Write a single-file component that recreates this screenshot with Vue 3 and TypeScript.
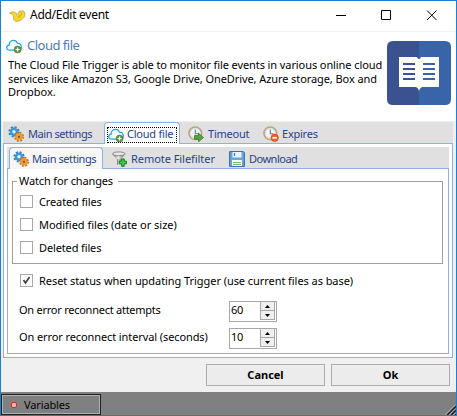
<script setup lang="ts">
import { ref } from 'vue'

interface Tab { label: string; icon: string; cls: string }

const outerTabs: Tab[] = [
  { label: 'Main settings', icon: 'gears', cls: 'main' },
  { label: 'Cloud file', icon: 'cloud', cls: 'cloud' },
  { label: 'Timeout', icon: 'timeout', cls: 'timeout' },
  { label: 'Expires', icon: 'expires', cls: 'expires' },
]
const innerTabs: Tab[] = [
  { label: 'Main settings', icon: 'gears', cls: 'main' },
  { label: 'Remote Filefilter', icon: 'filter', cls: 'filter' },
  { label: 'Download', icon: 'disk', cls: 'download' },
]
const outer = ref(1)
const inner = ref(0)

const watches = ref([
  { label: 'Created files', cls: 'created', on: false },
  { label: 'Modified files (date or size)', cls: 'modified', on: false },
  { label: 'Deleted files', cls: 'created', on: false },
])
const reset = ref(true)
const spins = ref([
  { label: 'On error reconnect attempts', cls: 'attempts', value: 60 },
  { label: 'On error reconnect interval (seconds)', cls: 'interval', value: 10 },
])
</script>

<template>
  <div class="window">
    <svg class="defs" width="0" height="0">
      <defs>
        <linearGradient id="cone" x1="0" x2="1"><stop offset="0" stop-color="#555" /><stop offset=".45" stop-color="#eee" /><stop offset="1" stop-color="#555" /></linearGradient>
        <linearGradient id="stem" x1="0" x2="1"><stop offset="0" stop-color="#666" /><stop offset=".5" stop-color="#ddd" /><stop offset="1" stop-color="#555" /></linearGradient>
        <symbol id="cloud" viewBox="0 0 16 16">
          <path d="M3.8 12.2C1.9 12.2.7 11.200.7 9.700.7 8.300 1.700 7.200 3.100 7.100 3.100 4.300 5 2.300 7.300 2.300 9.300 2.300 10.900 3.400 11.400 5.200 13.800 5.100 15.300 6.600 15.300 8.900 15.300 10.900 14 12.200 12.300 12.200Z" fill="#f5fcff" stroke="#1ba6e0" stroke-width="1.3" />
          <circle cx="11.600" cy="11.500" r="3.500" fill="#5f9548" stroke="#467935" stroke-width=".6" />
          <path d="M11.600 9.500v4M9.600 11.500h4" stroke="#fff" stroke-width="1.200" />
        </symbol>
        <symbol id="gears" viewBox="0 0 16 16">
          <circle cx="6" cy="5.800" r="4.500" fill="none" stroke="#2f83c2" stroke-width="2.400" stroke-dasharray="2 1.534" />
          <circle cx="6" cy="5.800" r="3" fill="#d3ebf7" stroke="#3d97d2" stroke-width="2.400" />
          <circle cx="6" cy="5.800" r="1" fill="#fff" />
          <circle cx="11" cy="10.800" r="4" fill="none" stroke="#c9691d" stroke-width="2" stroke-dasharray="1.800 1.342" />
          <circle cx="11" cy="10.800" r="2.500" fill="#fff" stroke="#f09a30" stroke-width="2.500" />
          <circle cx="11" cy="10.800" r="1.200" fill="#795338" />
        </symbol>
        <symbol id="clock" viewBox="0 0 16 16">
          <circle cx="7.300" cy="7.300" r="6.300" fill="#f3f5f8" stroke="#bba47f" stroke-width="1.600" />
          <circle cx="7.300" cy="7.300" r="4.900" fill="none" stroke="#cdd7e2" stroke-width=".8" />
          <path d="M7.300 3.500v4.200h3" fill="none" stroke="#77777c" stroke-width="1.100" />
        </symbol>
        <symbol id="timeout" viewBox="0 0 16 16">
          <use href="#clock" width="16" height="16" />
          <path d="M6.500 9.600h4V7.200l5 4.300-5 4.300v-2.600h-4z" fill="#55a63c" stroke="#30752a" stroke-width=".8" />
        </symbol>
        <symbol id="expires" viewBox="0 0 16 16">
          <use href="#clock" width="16" height="16" />
          <circle cx="11.700" cy="11.800" r="3.700" fill="#e7662d" stroke="#c74718" stroke-width=".7" />
          <path d="M9.500 11.800h4.400" stroke="#fff" stroke-width="1.600" />
        </symbol>
        <symbol id="filter" viewBox="0 0 16 16">
          <path d="M.4 3L5 8.500h3.600L13.200 3z" fill="url(#cone)" />
          <path d="M5 8.300h3.600v4.500L5 14z" fill="url(#stem)" />
          <ellipse cx="6.800" cy="2.800" rx="6.300" ry="1.900" fill="#e6e6e6" stroke="#777" stroke-width=".8" />
          <path d="M9.600 7.900h2.600v2.300h2.300v2.600h-2.300v2.500H9.600v-2.500H7.300v-2.600h2.300z" fill="#3bd048" stroke="#137a20" stroke-width="1" />
        </symbol>
        <symbol id="disk" viewBox="0 0 16 16">
          <path d="M.6.6h13.800l1 1v13.800H.6z" fill="#69a5dc" stroke="#2f6ca8" stroke-width="1" />
          <path d="M3.500 1h9v5.500h-9z" fill="#edf4fa" />
          <path d="M5.500 2v3" stroke="#3b73ad" stroke-width="1.200" />
          <path d="M3 9h10v6H3z" fill="#f4faef" />
          <path d="M4 11.500h8M4 13.500h8" stroke="#7fc162" stroke-width="1.200" />
        </symbol>
      </defs>
    </svg>

    <header class="titlebar">
      <svg class="logo" viewBox="0 0 17 13" width="17" height="13">
        <path d="M.5 3L2.500 2H5.500L7.500 3.500 8.500 6.300 10.500 6 9 3.500 10.500 1H12.500L14.500 .800 15.800 3V6.500L12.500 9.800 9 11.300H6.500L4.500 9.500V6L3 4Z" fill="#f9d922" stroke="#b8a35a" stroke-width=".8" stroke-linejoin="round" />
        <path d="M11.500 2l1.500 1.800-3.500 4.400" fill="none" stroke="#c9a51b" stroke-width=".8" />
      </svg>
      <span class="title">Add/Edit event</span>
      <svg class="winctl" viewBox="0 0 102 12" width="102" height="12" fill="none" stroke="#000">
        <path d="M0 5.500h10M45.500 .500h9v9h-9z" /><path d="M91 .500l9.500 9.500M100.500 .500L91 10" />
      </svg>
    </header>

    <section class="intro">
      <div class="copy">
        <div class="heading"><svg width="16" height="16"><use href="#cloud" /></svg><span>Cloud file</span></div>
        <p><span class="l1">The Cloud File Trigger is able to monitor file events in various online cloud</span><br><span class="l2">services like Amazon S3, Google Drive, OneDrive, Azure storage, Box and</span><br><span>Dropbox.</span></p>
      </div>
      <svg class="book" viewBox="0 0 64 64" width="64" height="64">
        <path d="M32 0H6Q0 0 0 6v52q0 6 6 6h26z" fill="#3a5290" /><path d="M32 0h26q6 0 6 6v52q0 6-6 6H32z" fill="#3965a8" />
        <path d="M12 16h18q.5 2 2 2t2-2h18v30H36q-3 0-4 4-1-4-4-4H12z" fill="#fff" />
        <path d="M16 23h12M16 28h12M16 33h12M16 38h12" stroke="#3a5290" stroke-width="2" />
        <path d="M36 23h12M36 28h12M36 33h12M36 38h12" stroke="#3965a8" stroke-width="2" />
      </svg>
    </section>

    <main class="body">
      <nav class="strip outer">
        <div v-for="(t, i) in outerTabs" :key="t.label" class="tab" :class="[t.cls, { active: outer === i }]" @click="outer = i">
          <span class="face"><svg width="16" height="16"><use :href="'#' + t.icon" /></svg><span class="label">{{ t.label }}</span></span>
        </div>
      </nav>
      <div class="panel outer-panel">
        <nav class="strip inner">
          <div v-for="(t, i) in innerTabs" :key="t.label" class="tab" :class="[t.cls, { active: inner === i }]" @click="inner = i">
            <svg width="16" height="16"><use :href="'#' + t.icon" /></svg><span class="label">{{ t.label }}</span>
          </div>
        </nav>
        <div class="panel inner-panel">
          <div class="group">
            <span class="legend">Watch for changes</span>
            <div v-for="w in watches" :key="w.label" class="check" @click="w.on = !w.on">
              <span class="box"><svg v-if="w.on" width="11" height="11"><path d="M2.500 5l2 3 4-6" /></svg></span><span :class="w.cls">{{ w.label }}</span>
            </div>
          </div>
          <div class="check reset" @click="reset = !reset">
            <span class="box"><svg v-if="reset" width="11" height="11"><path d="M2.500 5l2 3 4-6" /></svg></span><span class="base">Reset status when updating Trigger (use current files as base)</span>
          </div>
          <div v-for="s in spins" :key="s.label" class="field">
            <span class="name" :class="s.cls">{{ s.label }}</span>
            <div class="spin">
              <span class="value">{{ s.value }}</span>
              <div class="steps">
                <span class="step" @click="s.value++"><svg width="6" height="3"><path d="M0 3L2.500 0 5 3z" /></svg></span>
                <span class="step" @click="s.value--"><svg width="6" height="3"><path d="M0 0l2.500 3L5 0z" /></svg></span>
              </div>
            </div>
          </div>
        </div>
      </div>
      <div class="actions"><div class="btn cancel">Cancel</div><div class="btn">Ok</div></div>
    </main>

    <footer class="status">
      <div class="vars"><i class="dot"></i><span>Variables</span></div>
      <svg class="grip" width="11" height="11">
        <path d="M0 11L11 0V11z" fill="#555" /><path d="M.500 11L11 .500M4.500 11L11 4.500M8.500 11L11 8.500" stroke="#eee" stroke-width="1" /><path d="M2 11L11 2M6 11L11 6M10 11l1-1" stroke="#222" stroke-width="1.300" />
      </svg>
    </footer>
  </div>
</template>

<style>
body { overflow: hidden; }
</style>
<style scoped>
* { box-sizing: border-box; }
.window { width: 457px; height: 416px; border: 1px solid #1a80d3; background: #fff; display: flex; flex-direction: column; font: 11px/13px "Noto Sans", "DejaVu Sans Condensed", sans-serif; color: #000; white-space: nowrap; cursor: default; }
.window svg { display: block; flex: none; }
.window .defs { position: absolute; }
.titlebar { height: 31px; flex: none; border-bottom: 1px solid #f0f0f0; display: flex; padding-left: 8px; }
.logo { margin-top: 9px; }
.title { font-size: 12px; line-height: 16px; letter-spacing: -.27px; margin: 6px 0 0 4px; }
.winctl { margin: 9px 18px 0 auto; }
.intro { height: 89px; flex: none; display: flex; justify-content: space-between; padding: 0 5px 0 5px; }
.heading { display: flex; height: 26px; padding-top: 6px; gap: 5px; color: #4b7eb5; font-size: 13px; line-height: 14px; letter-spacing: -.5px; }
.intro p { margin: 0 0 0 2px; line-height: 13.5px; }
.l1 { letter-spacing: -.09px; }
.l2 { letter-spacing: -.085px; }
.book { margin-top: 9px; }
.body { height: 271px; flex: none; background: #f0f0f0; padding: 1px 3px 0 2px; }
.strip { display: flex; height: 21px; background: #e0e0e0; color: #1e4489; }
.inner { padding-left: 2px; width: 442px; }
.tab { height: 21px; display: flex; align-items: center; gap: 4px; padding: 2px 0 0 8px; }
.face { display: flex; align-items: center; gap: 4px; }
.tab.active { height: 22px; background: #fff; border: 1px solid #8fb0e4; border-bottom: 0; border-radius: 4px 4px 0 0; position: relative; }
.outer .main { width: 101px; padding-left: 5px; }
.outer .cloud { width: 76px; padding: 3px 2px 1px; }
.outer .active .face { border: 1px dotted #000; height: 16px; flex: 1; gap: 3px; }
.outer .active .label { line-height: 11px; }
.outer .timeout { width: 75px; }
.outer .expires .face { gap: 3px; }
.inner .main { width: 94px; padding: 1px 0 0 3px; gap: 3px; background: #f7f7f7; }
.inner .active .label { margin-top: -2px; }
.inner .filter { width: 118px; padding-left: 9px; gap: 3px; }
.main .label { letter-spacing: -.43px; }
.cloud .label, .timeout .label, .expires .label { letter-spacing: -.23px; }
.outer .cloud .label { margin-top: -2px; }
.filter .label { letter-spacing: -.05px; }
.download .label { letter-spacing: -.5px; }
.panel { border: 1px solid #8fb0e4; background: #fff; }
.outer-panel { height: 215px; width: 450px; padding: 3px; }
.inner-panel { height: 186px; width: 442px; padding: 12px 5px 0 4px; }
.group { border: 1px solid #a0a0a0; height: 83px; padding: 13px 0 0 7px; display: flex; flex-direction: column; gap: 10px; position: relative; }
.legend { position: absolute; left: 4px; top: -8px; background: #fff; padding: 0 5px 0 2px; letter-spacing: -.13px; }
.check { display: flex; height: 13px; gap: 6px; }
.box { width: 13px; height: 13px; border: 1px solid #a8a8a8; flex: none; }
.box path { fill: none; stroke: #444; stroke-width: 1.800; }
.created { letter-spacing: -.13px; }
.modified { letter-spacing: -.03px; }
.reset { margin: 10px 0 14px 8px; }
.base { letter-spacing: -.06px; }
.field { height: 21px; margin: 0 0 6px 7px; display: flex; }
.name { width: 210px; line-height: 18px; }
.attempts { letter-spacing: -.25px; }
.interval { letter-spacing: -.1px; }
.spin { width: 48px; border: 1px solid #a6a6ab; display: flex; justify-content: space-between; }
.value { line-height: 16px; padding-left: 1px; letter-spacing: -.2px; }
.steps { width: 15px; margin-right: 1px; height: 18px; border: 1px solid #a6a6ab; border-top: 0; }
.step { height: 8px; background: #f0f0f0; display: flex; align-items: center; justify-content: center; }
.step + .step { border-top: 1px solid #a6a6ab; height: 9px; }
.actions { display: flex; justify-content: flex-end; gap: 6px; padding: 6px 3px 0 0; }
.btn { width: 119px; height: 22px; border: 1px solid #adadad; background: #ececec; font-weight: 700; text-align: center; line-height: 20px; }
.status { flex: 1; background: #808080; display: flex; justify-content: space-between; align-items: flex-end; }
.vars { width: 100px; height: 21px; border: 1px solid #222; box-shadow: inset 0 0 0 1px #b0b0b0; display: flex; align-items: center; gap: 7px; padding: 0 0 1px 9px; letter-spacing: -.13px; }
.dot { width: 6px; height: 6px; border-radius: 2px; background: #ffb0b0; border: 1px solid #d92a2a; margin-top: 2px; }
</style>
